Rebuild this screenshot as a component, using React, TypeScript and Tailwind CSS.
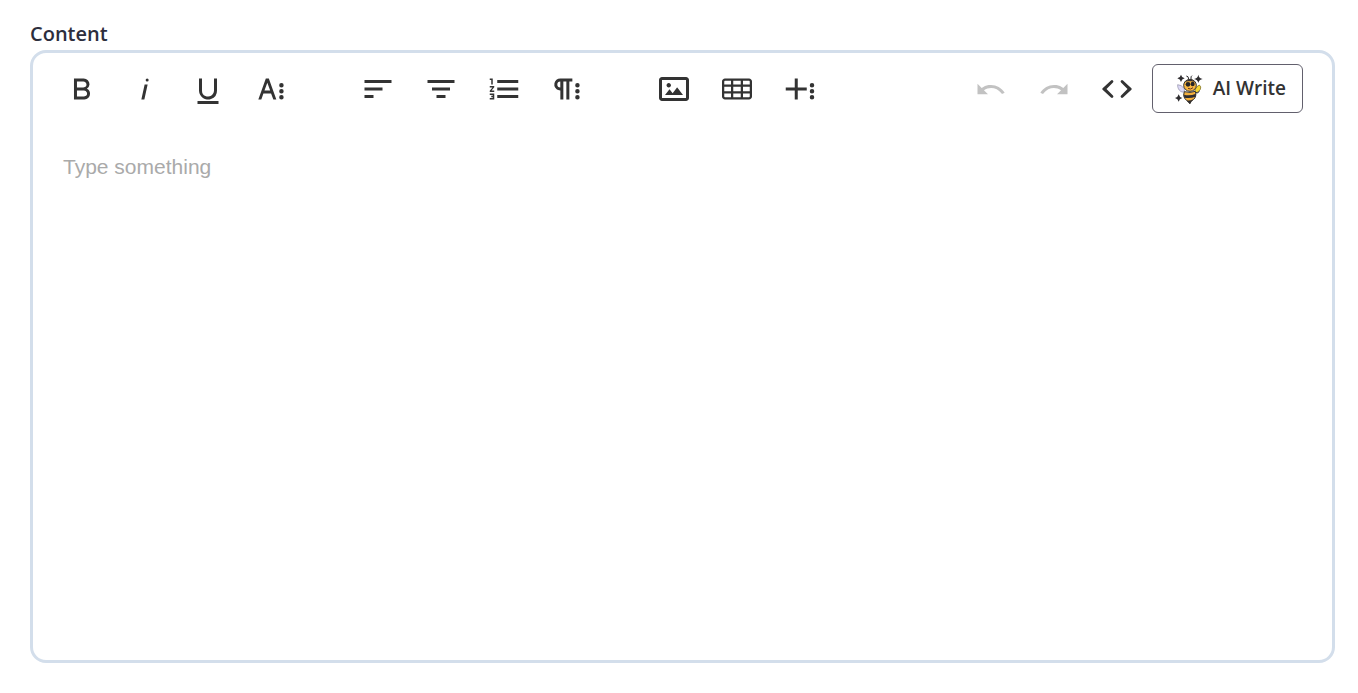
import type { ReactNode } from "react";
import clsx from "clsx";

interface Tool {
  label: string;
  path: string;
  disabled?: boolean;
}

const DOTS =
  "M20.45,17.5a1.5,1.5,0,1,1-1.5-1.5A1.5,1.5,0,0,1,20.45,17.5Zm0-4a1.5,1.5,0,1,1-1.5-1.5A1.5,1.5,0,0,1,20.45,13.5Zm0-4A1.5,1.5,0,1,1,18.95,8,1.5,1.5,0,0,1,20.45,9.5Z";

const textTools: Tool[] = [
  {
    label: "Bold",
    path: "M15.25,11.8h0A3.68,3.68,0,0,0,17,9a3.93,3.93,0,0,0-3.86-4H6.65V19h7a3.74,3.74,0,0,0,3.7-3.78V15.1A3.64,3.64,0,0,0,15.25,11.8ZM8.65,7h4.2a2.09,2.09,0,0,1,2,1.3,2.09,2.09,0,0,1-1.37,2.61,2.23,2.23,0,0,1-.63.09H8.65Zm4.6,10H8.65V13h4.6a2.09,2.09,0,0,1,2,1.3,2.09,2.09,0,0,1-1.37,2.61A2.23,2.23,0,0,1,13.25,17Z",
  },
  {
    label: "Italic",
    path: "M11.76,9h2l-2.2,10h-2Zm1.68-4a1,1,0,1,0,1,1,1,1,0,0,0-1-1Z",
  },
  {
    label: "Underline",
    path: "M19,20v2H5V20Zm-3-6.785a4,4,0,0,1-5.74,3.4A3.75,3.75,0,0,1,8,13.085V5.005H6v8.21a6,6,0,0,0,8,5.44,5.851,5.851,0,0,0,4-5.65v-8H16Z",
  },
  {
    label: "More Text",
    path: "M13.55,19h2l-5-14h-2l-5,14h2l1.4-4h5.1Zm-5.9-6,1.9-5.2,1.9,5.2Z" + DOTS,
  },
];

const paragraphTools: Tool[] = [
  { label: "Align Left", path: "M3,18h6V16H3ZM3,6V8H21V6Zm0,7H15V11H3Z" },
  { label: "Align Center", path: "M9,18h6V16H9ZM3,6V8H21V6Zm3,7H18V11H6Z" },
  {
    label: "Ordered List",
    path: "M2.5,16h2v.5h-1v1h1V18h-2v1h3V15h-3Zm1-7h1V5h-2V6h1Zm-1,2H4.3L2.5,13.1V14h3V13H3.7l1.8-2.1V10h-3Zm5-5V8h14V6Zm0,12h14V16H7.5Zm0-5h14V11H7.5Z",
  },
  {
    label: "More Paragraph",
    path:
      "M7.682,5a4.11,4.11,0,0,0-4.07,3.18,4,4,0,0,0,3.11,4.725h0l.027.005a3.766,3.766,0,0,0,.82.09v6h2V7h2V19h2V7h2V5ZM5.532,9a2,2,0,0,1,2-2v4A2,2,0,0,1,5.532,9Z" +
      DOTS,
  },
];

const richTools: Tool[] = [
  {
    label: "Insert Image",
    path: "M14.2,11l3.8,5H6l3-3.9l2.1,2.7L14,11H14.2z M8.5,11c0.8,0,1.5-0.7,1.5-1.5S9.3,8,8.5,8S7,8.7,7,9.5C7,10.3,7.7,11,8.5,11z M22,6v12c0,1.1-0.9,2-2,2H4c-1.1,0-2-0.9-2-2V6c0-1.1,0.9-2,2-2h16C21.1,4,22,4.9,22,6z M20,8.8V6H4v12h16V8.8z",
  },
  {
    label: "Insert Table",
    path: "M20,5H4C2.9,5,2,5.9,2,7v2v1.5v3V15v2c0,1.1,0.9,2,2,2h16c1.1,0,2-0.9,2-2v-2v-1.5v-3V9V7C22,5.9,21.1,5,20,5z M9.5,13.5v-3h5v3H9.5z M14.5,15v2.5h-5V15H14.5z M9.5,9V6.5h5V9H9.5z M3.5,7c0-0.3,0.2-0.5,0.5-0.5h4V9H3.5V7z M3.5,10.5H8v3H3.5V10.5z M3.5,17v-2H8v2.5H4C3.7,17.5,3.5,17.3,3.5,17z M20.5,17c0,0.3-0.2,0.5-0.5,0.5h-4V15h4.5V17z M20.5,13.5H16v-3h4.5V13.5z M16,9V6.5h4c0.3,0,0.5,0.2,0.5,0.5v2H16z",
  },
  {
    label: "More Rich",
    path: "M16.5,13h-6v6h-2V13h-6V11h6V5h2v6h6Zm5,4.5A1.5,1.5,0,1,1,20,16,1.5,1.5,0,0,1,21.5,17.5Zm0-4A1.5,1.5,0,1,1,20,12,1.5,1.5,0,0,1,21.5,13.5Zm0-4A1.5,1.5,0,1,1,20,8,1.5,1.5,0,0,1,21.5,9.5Z",
  },
];

const miscTools: Tool[] = [
  {
    label: "Undo",
    path: "M10.4,9.4c-1.7,0.3-3.2,0.9-4.6,2L3,8.5v7h7l-2.7-2.7c3.7-2.6,8.8-1.8,11.5,1.9c0.2,0.2,0.3,0.5,0.5,0.7l1.8-0.9C18.8,10.8,14.6,8.7,10.4,9.4z",
    disabled: true,
  },
  {
    label: "Redo",
    path: "M13.6,9.4c1.7,0.3,3.2,0.9,4.6,2L21,8.5v7h-7l2.7-2.7C13,10.2,7.9,11,5.2,14.7c-0.2,0.2-0.3,0.5-0.5,0.7l-1.8-0.9C5.2,10.8,9.4,8.7,13.6,9.4z",
    disabled: true,
  },
  {
    label: "Code View",
    path: "M9.3,7.6L5,12l4.3,4.4a.9,.9,0,0,1-1.3,1.3L2.4,12.5a.7,.7,0,0,1,0-1L8,6.3a.9,.9,0,0,1,1.3,1.3ZM14.7,7.6L19,12l-4.3,4.4a.9,.9,0,0,0,1.3,1.3L21.6,12.5a.7,.7,0,0,0,0-1L16,6.3a.9,.9,0,0,0-1.3,1.3Z",
  },
];

function ToolButton({ tool }: { tool: Tool }) {
  return (
    <button
      type="button"
      aria-label={tool.label}
      disabled={tool.disabled}
      className={clsx(
        "flex h-12 w-[57px] items-center justify-center rounded",
        tool.disabled ? "text-[#c2c2c2]" : "text-[#333333] hover:bg-gray-100"
      )}
    >
      <svg viewBox="0 0 24 24" className="size-9" fill="currentColor">
        <path d={tool.path} />
      </svg>
    </button>
  );
}

function ToolGroup({ tools, children }: { tools: Tool[]; children?: ReactNode }) {
  return (
    <div className="flex items-center gap-1.5">
      {tools.map((tool) => (
        <ToolButton key={tool.label} tool={tool} />
      ))}
      {children}
    </div>
  );
}

function BeeIcon() {
  return (
    <svg viewBox="0 0 114 120" className="h-10 w-[38px] shrink-0" fill="none">
      {/* sparkles */}
      <g fill="#2f2d30">
        <path d="M33 17q2 9 11 11q-9 2-11 11q-2-9-11-11q9-2 11-11Z" />
        <path d="M85 17q2 11 13 13q-11 2-13 12q-2-10-13-12q11-2 13-13Z" />
        <path d="M26 76q2 9 11 11q-9 2-11 11q-2-9-11-11q9-2 11-11Z" />
      </g>
      {/* antennae */}
      <path d="M56 31q0-10-7-10M63 31q-1-10 3-11" stroke="#2f2d30" strokeWidth="3" />
      {/* wings */}
      <path d="M43 69C30 71 22 59 23 47q11 0 20 12Z" fill="#dcd9f5" stroke="#8d89a3" strokeWidth="2" />
      <path d="M74 66Q77 52 88 48q7 5 3 13-5 9-14 11Z" fill="#f7d731" stroke="#6d6020" strokeWidth="2" />
      {/* body */}
      <path d="M43 68q-5 12 1 20 6 7 16 16 2-8 10-12 11-9 6-25-15 6-33 1Z" fill="#f5b03c" stroke="#333" strokeWidth="3" />
      <path d="M42 77q17 5 36-3l-2 9q-14 6-33 3ZM50 94q10 2 19-3l-6 7-3 7Z" fill="#2f2d30" />
      {/* head */}
      <ellipse cx="60" cy="49" rx="19" ry="18" fill="#f8b741" stroke="#333" strokeWidth="3" />
      <path d="M43 39q17-15 33 0-8-3-16-2-9-1-17 2Z" fill="#373235" />
      <ellipse cx="54" cy="46" rx="7" ry="7" fill="#252426" />
      <ellipse cx="68" cy="45" rx="6" ry="7" fill="#252426" />
      <path d="M54 58q8 5 15-2" stroke="#6a3926" strokeWidth="3" />
      <path d="M75 71q10 3 14-5" stroke="#333" strokeWidth="3" />
    </svg>
  );
}

export default function App() {
  return (
    <main className="flex min-h-screen flex-col bg-white pt-5 pr-[23px] pb-[30px] pl-[30px] font-['Open_Sans',sans-serif]">
      <label htmlFor="content" className="mb-0.5 self-start text-[20px] leading-7 font-semibold text-[#2d2e3d]">
        Content
      </label>
      <div className="flex flex-1 flex-col rounded-2xl border-3 border-[#d3deeb]">
        <div className="flex items-center justify-between pt-[11px] pr-[29px] pl-5">
          <div className="flex gap-[50px]">
            <ToolGroup tools={textTools} />
            <ToolGroup tools={paragraphTools} />
            <ToolGroup tools={richTools} />
          </div>
          <ToolGroup tools={miscTools}>
            <button
              type="button"
              className="flex h-[49px] items-center gap-[5px] rounded-md border border-[#62606d] pr-4 pl-[17px] text-[19px] font-semibold text-[#333333]"
            >
              <BeeIcon />
              AI Write
            </button>
          </ToolGroup>
        </div>
        <textarea
          id="content"
          placeholder="Type something"
          className="w-full flex-1 resize-none rounded-b-2xl px-[30px] pt-10 font-['Liberation_Sans',sans-serif] text-[21px] leading-7 text-[#333333] outline-none placeholder:text-[#aaaaaa]"
        />
      </div>
    </main>
  );
}
